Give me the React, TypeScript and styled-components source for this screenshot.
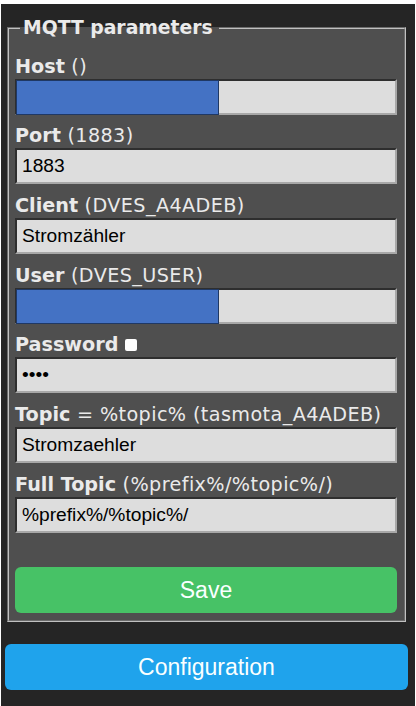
import styled, { createGlobalStyle } from "styled-components";

const GlobalStyle = createGlobalStyle`
  html, body {
    margin: 0;
    padding: 0;
    background: #ffffff;
  }
`;

const Page = styled.div`
  margin: 4px 1px 0;
  min-height: 702px;
  background: #252525;
  padding: 13px 7px 0 4px;
  box-sizing: border-box;
  font-family: Verdana, "DejaVu Sans", sans-serif;
  font-size: 19.2px;
  color: #eaeaea;
  overflow: hidden;
`;

const Fieldset = styled.fieldset`
  margin: 0 2px;
  padding: 0 7px 7px 6px;
  border: 2px groove #c0c0c0;
  background: #4f4f4f;
  min-width: 0;
`;

const Legend = styled.legend`
  margin-left: 5px;
  padding: 0 6px 0 3px;
  font-weight: bold;
  font-size: 18.8px;
  line-height: 22px;
`;

const Field = styled.div<{ $first?: boolean }>`
  margin-top: ${(p) => (p.$first ? "15.5px" : "9.7px")};
`;

const Label = styled.div`
  height: 24px;
  line-height: 24px;
  white-space: nowrap;
  display: flex;
  align-items: center;

  b {
    font-weight: bold;
  }
`;

const Hint = styled.span`
  letter-spacing: 0.4px;
`;

const Check = styled.input`
  appearance: none;
  width: 12px;
  height: 12px;
  margin: 0 0 0 7px;
  border-radius: 2px;
  background: #ffffff;
`;

const Box = styled.div`
  position: relative;
  height: 36px;
  box-sizing: border-box;
  border-style: solid;
  border-width: 2px;
  border-color: #2e2e2e #a8a8a8 #a8a8a8 #2e2e2e;
  background: #dddddd;
`;

const Input = styled.input`
  display: block;
  width: 100%;
  height: 100%;
  box-sizing: border-box;
  border: 0;
  margin: 0;
  padding: 0 5px;
  background: transparent;
  color: #000000;
  font-family: Arial, "Liberation Sans", sans-serif;
  font-size: 19.2px;
  outline: none;
`;

const Masked = styled.span`
  position: absolute;
  left: -1px;
  top: -1px;
  width: 203px;
  height: 35px;
  box-sizing: border-box;
  background: #4472c4;
  border: 1px solid #1f3864;
`;

const Button = styled.button<{ $bg: string }>`
  display: block;
  width: 100%;
  height: 46px;
  border: 0;
  border-radius: 6px;
  background: ${(p) => p.$bg};
  color: #faffff;
  font-family: Arial, "Liberation Sans", sans-serif;
  font-size: 23px;
  line-height: 46px;
  padding: 0;
  cursor: pointer;
`;

const SaveWrap = styled.div`
  margin-top: 34px;
`;

const ConfigWrap = styled.div`
  margin-top: 22px;
`;

type F = {
  name: string;
  hint: string;
  value: string;
  masked?: boolean;
  password?: boolean;
};

const fields: F[] = [
  { name: "Host", hint: "()", value: "", masked: true },
  { name: "Port", hint: "(1883)", value: "1883" },
  { name: "Client", hint: "(DVES_A4ADEB)", value: "Stromzähler" },
  { name: "User", hint: "(DVES_USER)", value: "", masked: true },
  { name: "Password", hint: "", value: "abcd", password: true },
  { name: "Topic", hint: "= %topic% (tasmota_A4ADEB)", value: "Stromzaehler" },
  { name: "Full Topic", hint: "(%prefix%/%topic%/)", value: "%prefix%/%topic%/" },
];

export default function App() {
  return (
    <>
      <GlobalStyle />
      <Page>
        <Fieldset>
          <Legend>MQTT parameters</Legend>
          {fields.map((f, i) => (
            <Field key={f.name} $first={i === 0}>
              <Label>
                <b>{f.name}</b>
                {f.hint && <Hint>&nbsp;{f.hint}</Hint>}
                {f.password && <Check type="checkbox" />}
              </Label>
              <Box>
                <Input
                  type={f.password ? "password" : "text"}
                  defaultValue={f.value}
                />
                {f.masked && <Masked />}
              </Box>
            </Field>
          ))}
          <SaveWrap>
            <Button $bg="#47c266">Save</Button>
          </SaveWrap>
        </Fieldset>
        <ConfigWrap>
          <Button $bg="#1fa3ec">Configuration</Button>
        </ConfigWrap>
      </Page>
    </>
  );
}
